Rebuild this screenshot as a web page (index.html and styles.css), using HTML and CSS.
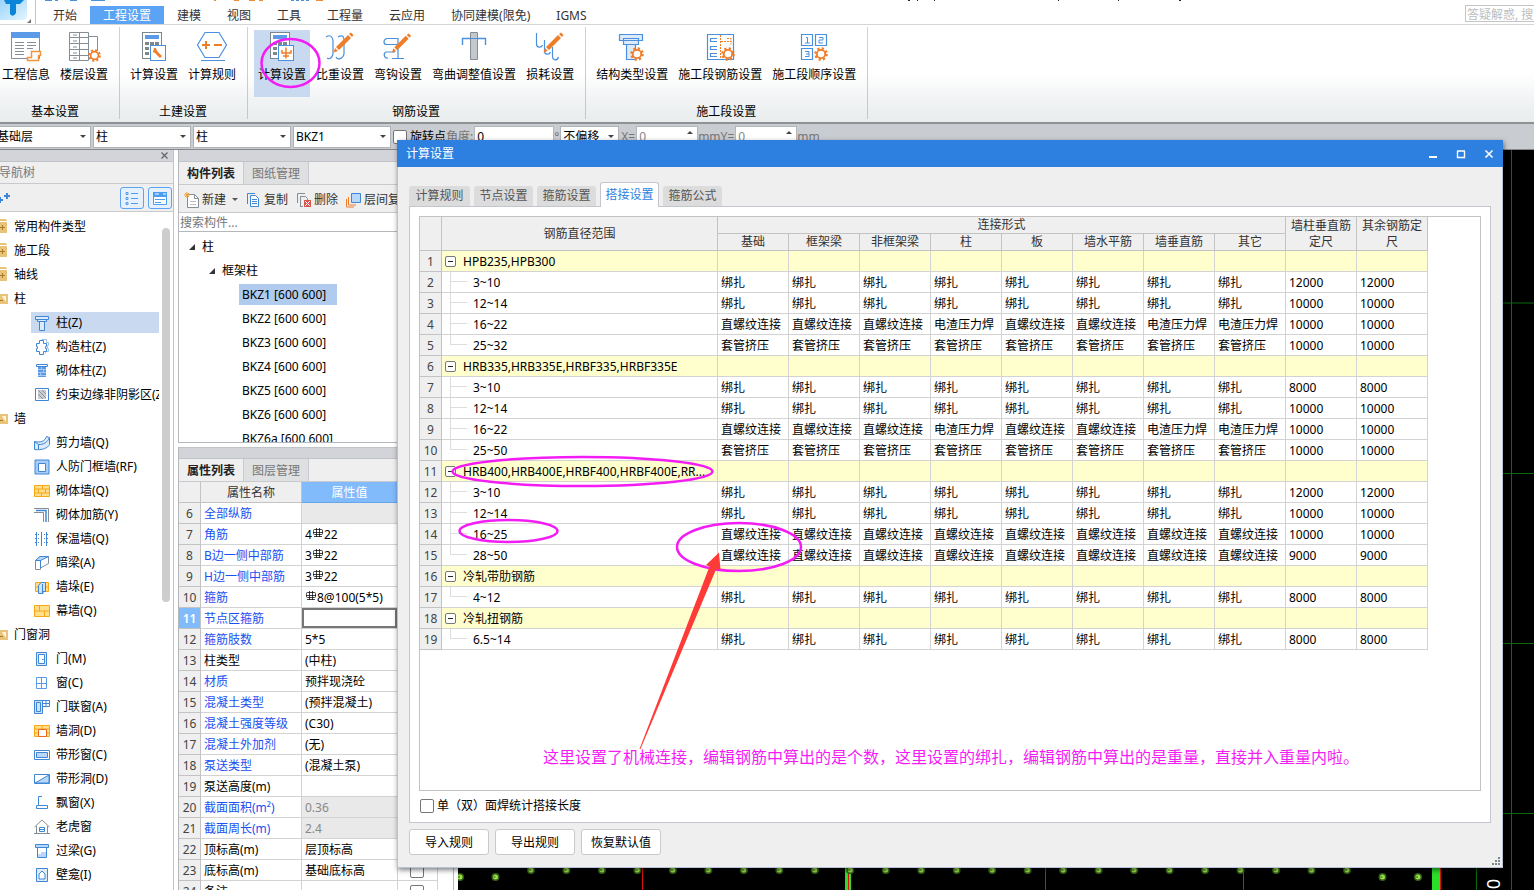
FILE: index.html
```html
<!DOCTYPE html>
<html lang="zh-CN">
<head>
<meta charset="utf-8">
<title>计算设置</title>
<link rel="stylesheet" href="styles.css">
</head>
<body>
<svg class="defs" aria-hidden="true">
  <symbol id="gear" viewBox="0 0 14 14"><circle cx="7" cy="7" r="5.6" fill="none" stroke="#f07d28" stroke-width="2.4" stroke-dasharray="2.2 2.2"/><circle cx="7" cy="7" r="4.2" fill="#fff" stroke="#f07d28" stroke-width="1.8"/></symbol>
  <symbol id="pencil" viewBox="0 0 22 22"><path d="M4 15 16 3l3 3L7 18zM17 2l2-1.500 2.500 2.500L20 5zM3 16l3 3-4.500 1.500z" fill="#f07d28"/></symbol>
  <symbol id="calc" viewBox="0 0 36 32"><rect x="6.500" y="1.500" width="19" height="26" fill="#fff" stroke="#7d868c"/><rect x="9" y="4" width="14" height="4" fill="#5a9ae6"/><path d="M9 11h4v3H9zm5 0h4v3h-4zm5 0h4v3h-4zM9 16h4v3H9zm5 0h4v3h-4zM9 21h4v3H9z" fill="#7d868c"/><rect x="14.500" y="14.500" width="15" height="15" fill="#fff" stroke="#4a90dd"/></symbol>
  <symbol id="folder" viewBox="0 0 16 16"><path d="M1 3h14v11H1z" fill="#e9c37a"/><path d="M8 0h6l1 2H7z" fill="#e9c37a"/><path d="M8 8.500h5M10.500 6v5" stroke="#a87a2c"/></symbol>
  <symbol id="folder-open" viewBox="0 0 16 16"><path d="M0 3h16v10H0z" fill="#e9c37a"/><path d="M10 5h4v6l-3-4z" fill="#fff3d6"/><path d="M6 9.500h5" stroke="#a87a2c"/></symbol>
  <symbol id="column" viewBox="0 0 16 16"><g fill="#dceafa" stroke="#3f86d6"><path d="M1.500 1.500h13v3h-13zM3.500 4.500h9v2h-9zM5.500 6.500h5v9h-5z"/></g></symbol>
  <symbol id="cross-column" viewBox="0 0 16 16"><path d="M7.500 .5h5v3h2v3h-1v3h1v3h-3v2" fill="none" stroke="#9dc3ee"/><path d="M5.500 1.500h4v3h3v3h-1v2h1v3h-3v3h-4v-3h-3v-3h1v-2h-1v-3h3z" fill="#fff" stroke="#3f86d6"/></symbol>
  <symbol id="brick-column" viewBox="0 0 16 16"><path d="M2.500 1.500h11v2h-11z" fill="#fff" stroke="#3f86d6"/><path d="M4 4h8v10H4z" fill="#5a9ae6"/><path d="M4 6.500h8M4 9.500h8M4 12.500h8M7.500 4v2M9.500 7v2M6.500 10v2" stroke="#dceafa" stroke-width=".6"/></symbol>
  <symbol id="hatch" viewBox="0 0 16 16"><path d="M1.500 1.500h13v12h-13z" fill="#fff" stroke="#3f86d6"/><path d="M4 3h8v9H4z" fill="#c9ccd0"/><path d="m4 3 8 8M4 7l5 5M8 3l4 4" stroke="#8d949a"/></symbol>
  <symbol id="shear-wall" viewBox="0 0 16 16"><path d="M.5 6.500C7 8 11 6 12.500 1.500l3 1v7C14 13 8 15.500 .5 14.500z" fill="#dceafa" stroke="#3f86d6"/><path d="M.5 6.500l4 3C9 10 14 7 15.500 2.500M4.500 9.500v5" fill="none" stroke="#3f86d6"/></symbol>
  <symbol id="frame-wall" viewBox="0 0 16 16"><path d="M1 1h14v14H1z" fill="#a9cdf6" stroke="#3f86d6"/><path d="M4.500 4.500h7v8h-7z" fill="#fff" stroke="#3f86d6"/></symbol>
  <symbol id="bricks" viewBox="0 0 16 16"><path d="M.5 2.500h15v11H.5z" fill="#ffdf8c" stroke="#f7a616"/><path d="M0 6h16M0 10h16M8.500 3v3M4.500 6v4M11.500 6v4M7.500 10v4" stroke="#f7a616"/></symbol>
  <symbol id="panels" viewBox="0 0 16 16"><path d="M.5 2.500h15v11H.5z" fill="#ffdf8c" stroke="#f7a616"/><path d="M0 8h16M5.500 3v5M10.500 8v5.500" stroke="#f7a616"/></symbol>
  <symbol id="corner-bars" viewBox="0 0 16 16"><path d="M0 1.500h14.500V15M0 5.500h9.500V15" fill="none" stroke="#858e95"/><path d="M2 3.500h10V15" fill="none" stroke="#3f86d6" stroke-width="1.500"/></symbol>
  <symbol id="insulate" viewBox="0 0 16 16"><path d="M2.500 1v14M7.500 1v14M12.500 1v14" stroke="#3f86d6"/><path d="M1 3.500h13M1 7.500h13M1 11.500h13" stroke="#3f86d6" stroke-dasharray="1 2"/></symbol>
  <symbol id="beam" viewBox="0 0 16 16"><path d="M1.500 5.500 6 1.500h8.500v7L6.500 13v1.500h-5z" fill="#fff" stroke="#858e95"/><path d="M1.500 5.500 6 1.500h8.500L6.500 5.500zM6.500 5v8" fill="#b9d7f9" stroke="#3f86d6"/></symbol>
  <symbol id="pier" viewBox="0 0 16 16"><path d="M1.500 3.500h13v9h-13z" fill="#ffdf8c" stroke="#f7a616"/><path d="M1 8h14" stroke="#f7a616"/><path d="M4.500 6.500 7 3.500h4.500v9H9v2H4.500z" fill="#cfe3fb" stroke="#3f86d6"/><path d="M8.500 5v9" stroke="#3f86d6"/></symbol>
  <symbol id="door" viewBox="0 0 16 16"><path d="M2.500 1.500h10v13h-10z" fill="#dceafa" stroke="#3f86d6"/><path d="M4.500 3.500h6v9h-6z" fill="#fff" stroke="#3f86d6"/><path d="M8 8h1.500v1H8z" fill="#3f86d6"/></symbol>
  <symbol id="window" viewBox="0 0 16 16"><path d="M2.500 2.500h10v11h-10zM7.500 2v12M2 8.500h11" fill="#fff" stroke="#5a9ae6"/></symbol>
  <symbol id="door-window" viewBox="0 0 16 16"><path d="M.5 1.500h8v13h-8z" fill="#cfe3fb" stroke="#3f86d6"/><path d="M2.500 3.500h4v9h-4zM8.500 1.500h7v6h-7zM12 1v7M8 4.500h8" fill="none" stroke="#3f86d6"/></symbol>
  <symbol id="hole" viewBox="0 0 16 16"><path d="M.5 2.500h15v11H.5z" fill="#ffdf8c" stroke="#f7a616"/><path d="M0 6h16M0 10h5m7 0h4M8 3v3" stroke="#f7a616"/><path d="M4.500 6.500h8v7h-8z" fill="#fff" stroke="#ee6a1f"/></symbol>
  <symbol id="strip-window" viewBox="0 0 16 16"><path d="M.5 3.500h15v9H.5z" fill="#fff" stroke="#3f86d6"/><path d="M2.500 5.500h11v5h-11z" fill="#b9d7f9" stroke="#3f86d6"/></symbol>
  <symbol id="strip-hole" viewBox="0 0 16 16"><path d="M.5 3.500h15v9H.5z" fill="#fff" stroke="#3f86d6"/><path d="M1 12 15 4v8z" fill="#b9d7f9" stroke="#3f86d6"/></symbol>
  <symbol id="bay" viewBox="0 0 16 16"><path d="M8 1.500H4.500v9h-2v3h11v-3h-9" fill="none" stroke="#3f86d6"/></symbol>
  <symbol id="dormer" viewBox="0 0 16 16"><path d="m.5 8 7.500-7 7.500 7M2.500 7v7.500h11V7M0 14.500h16" fill="none" stroke="#858e95"/><path d="M5.500 8.500h5v4h-5zM5 10.500h6" fill="none" stroke="#3f86d6"/></symbol>
  <symbol id="lintel" viewBox="0 0 16 16"><path d="M1.500 1.500h13v3h-13z" fill="#b9d7f9" stroke="#3f86d6"/><path d="M3.500 4.500h9v10h-9z" fill="#fff" stroke="#3f86d6"/><path d="M4 14v-3h3V9h5v5z" fill="#b9d7f9"/></symbol>
  <symbol id="niche" viewBox="0 0 16 16"><path d="M2.500 1.500h11v13h-11z" fill="#dceafa" stroke="#3f86d6"/><path d="M5 12V7l3-3 3 3v5z" fill="#fff" stroke="#3f86d6"/></symbol>
  <symbol id="rebar" viewBox="0 0 10 10"><path d="M.5 3.500v-1q0-1 1-1h7q1 0 1 1v3q0 1-1 1h-7q-1 0-1-1zM0 4.500h10M3.500 0v9M6.500 0v9M1 8.500h8" fill="none" stroke="#111" stroke-width=".8"/></symbol>
</svg>

<div class="app">
  <header class="topbar">
    <div class="logo">
      <svg width="36" height="24" viewBox="0 0 36 24" aria-hidden="true"><defs><linearGradient id="lg" x1="0" y1="0" x2="1" y2="1"><stop offset="0" stop-color="#9bd4fb"/><stop offset="1" stop-color="#e3f5ff"/></linearGradient></defs><path d="M0 0h27v16q0 4-4 4H0z" fill="url(#lg)"/><path d="M4 0h20l-4 4h-4v9q-3 5-6 1V4H6z" fill="#0c84d8"/><path d="M31 19v4h-4z" fill="#777"/></svg>
    </div>
    <nav class="tabs" aria-label="功能区">
      <a href="#">开始</a><a href="#" class="on">工程设置</a><a href="#">建模</a><a href="#">视图</a><a href="#">工具</a><a href="#">工程量</a><a href="#">云应用</a><a href="#">协同建模(限免)</a><a href="#">IGMS</a>
    </nav>
    <input class="ask" type="text" placeholder="答疑解惑, 搜索" aria-label="答疑解惑">
    <svg class="cutoff" width="1200" height="2" aria-hidden="true"><path d="M45 0h7M55 0h3M70 0h7M91 0h14M291 0h3m2 0h3m2 0h3m2 0h3" stroke="#4a90dd" stroke-width="2"/><path d="M214 0h2M234 0h5M249 0h6M259 0h4M316 0h7" stroke="#ef8a35" stroke-width="2"/><path d="M908 0h2M917 0h1M934 0h1M1058 0h1M1118 0h1M1179 0h2" stroke="#222" stroke-width="2"/></svg>
  </header>

  <section class="ribbon">
    <div class="group first">
      <div class="tools">
        <button><svg viewBox="0 0 36 32"><path d="M3.500 1.500h28v26h-28z" fill="#fff" stroke="#858e95"/><path d="M3 1h29v6H3z" fill="#5a9ae6"/><path d="M7 11.500h9M7 14.500h9M7 17.500h9M7 20.500h9M7 23.500h9M19 11.500h9M19 14.500h9M19 17.500h6" stroke="#858e95"/><path d="M23.500 20.500h9v4h-2v5h-11v-3h4z" fill="#fff" stroke="#f09440" stroke-width="1.500"/></svg>工程信息</button>
        <button><svg viewBox="0 0 36 32"><path d="M3.500 1.500h19v28h-19zM22.500 5.500h9V20M13.500 1v29M3 6.500h19M3 12.500h19M3 18.500h19M3 24.500h19" fill="none" stroke="#858e95"/><path d="M7 4h4M7 10h4M7 16h4M7 22h4M7 27h4" stroke="#858e95"/><use href="#gear" x="22" y="18" width="13" height="13"/></svg>楼层设置</button>
      </div>
      <h2>基本设置</h2>
    </div>
    <div class="group">
      <div class="tools">
        <button><svg viewBox="0 0 36 32"><use href="#calc"/><path d="m18 17 2 0 1 3 5 5-2 2-5-5-2-1z" fill="#f07d28"/></svg>计算设置</button>
        <button><svg viewBox="0 0 36 32"><path d="M11 1.500h14L32.500 14 25 26.500H11L3.500 14zM7 29.500h24" fill="none" stroke="#4a90dd" stroke-width="1.200"/><path d="M8 14h8M12 10v8M20 14h8" stroke="#f07d28" stroke-width="2"/></svg>计算规则</button>
      </div>
      <h2>土建设置</h2>
    </div>
    <div class="group">
      <div class="tools">
        <button class="on"><svg viewBox="0 0 36 32"><use href="#calc"/><path d="M22 16.500v11M18 19v3h9v-3M19 25h6" fill="none" stroke="#f07d28" stroke-width="1.500"/></svg>计算设置</button>
        <button><svg viewBox="0 0 36 32"><path d="M4 6c4-3 7 0 7 4v12c0 4-3 7-6 5M16 6c5-3 6 0 6 4v12c0 5-6 8-8 4" fill="none" stroke="#4a90dd" stroke-width="1.200"/><use href="#pencil" x="10" y="1" width="22" height="22"/></svg>比重设置</button>
        <button><svg viewBox="0 0 36 32"><path d="M18 7.500H7c-4 1-4 6 0 6h14M18 7v21M12 27.500h12M15 21H6c-3 1-2 7 2 6" fill="none" stroke="#4a90dd" stroke-width="1.200"/><use href="#pencil" x="10" y="2" width="22" height="21"/></svg>弯钩设置</button>
        <button><svg viewBox="0 0 36 32"><path d="M6.500 14V7.500h23V14" fill="none" stroke="#4a90dd" stroke-width="1.400"/><path d="M14.500 1.500h7v27h-7z" fill="#c2c8cd" stroke="#858e95"/><path d="M14 7.500h8" stroke="#4a90dd"/></svg>弯曲调整值设置</button>
        <button><svg viewBox="0 0 36 32"><path d="M4.500 2v11c0 4 5 4 6 1M12.500 9v11c0 4 5 4 6 1M20.500 16v9c0 5 5 5 6 1" fill="none" stroke="#4a90dd" stroke-width="1.200"/><use href="#pencil" x="10" y="1" width="22" height="22"/></svg>损耗设置</button>
      </div>
      <h2>钢筋设置</h2>
    </div>
    <div class="group">
      <div class="tools">
        <button><svg viewBox="0 0 36 32"><g fill="#dceafa" stroke="#4a90dd" stroke-width="1.200"><path d="M5.500 3.500h23v6h-23zM9.500 7.500h15v6h-15zM12.500 13.500h9v15h-9z"/></g><use href="#gear" x="16" y="16" width="14" height="14"/></svg>结构类型设置</button>
        <button><svg viewBox="0 0 36 32"><path d="M5.500 3.500h26v25h-26zM15 7.500H8.500v3H15M15 15.500H8.500v3H15M15 22.500H8.500v3H15" fill="none" stroke="#4a90dd" stroke-width="1.200"/><path d="M18.500 4v24M19 10.500h10M25 7.500h4v6" fill="none" stroke="#f07d28" stroke-dasharray="2 1"/><use href="#gear" x="19" y="16" width="14" height="14"/></svg>施工段钢筋设置</button>
        <button><svg viewBox="0 0 36 32"><path d="M5.500 3.500h11v11h-11zM19.500 3.500h11v11h-11zM5.500 17.500h11v11h-11z" fill="#fff" stroke="#4a90dd" stroke-width="1.200"/><path d="M10 6.500h1.500V12M9 12h5M23 6.500h4V9h-4v3h4M9 20.500h4v5H9M10 23h3" fill="none" stroke="#4a90dd"/><use href="#gear" x="18" y="16" width="14" height="14"/></svg>施工段顺序设置</button>
      </div>
      <h2>施工段设置</h2>
    </div>
  </section>

  <section class="options">
    <select class="cut" aria-label="楼层"><option>基础层</option></select>
    <select aria-label="构件大类"><option>柱</option></select>
    <select aria-label="构件类型"><option>柱</option></select>
    <select aria-label="构件"><option>BKZ1</option></select>
    <label class="rot"><input type="checkbox">旋转点</label>
    <label class="dim" for="angle">角度:</label><input id="angle" class="angle" type="text" value="0"><span class="dim deg">°</span>
    <select class="shift" aria-label="偏移"><option>不偏移</option></select>
    <label class="dim" for="ox">X=</label><input id="ox" class="off" type="text" value="0"><span class="dim">mm</span>
    <label class="dim" for="oy">Y=</label><input id="oy" class="off" type="text" value="0"><span class="dim">mm</span>
  </section>

  <main class="work">
    <aside class="nav">
      <div class="strip"><button aria-label="关闭"><svg width="7" height="7"><path d="m.5.5 6 6m0-6-6 6" stroke="#666" stroke-width="1.300"/></svg></button></div>
      <h2>导航树</h2>
      <div class="nav-tools">
        <svg class="plus" width="14" height="14" viewBox="0 0 14 14"><path d="M0 9h6M3 6v6M7 5h6M10 2v6" stroke="#3f86d6" stroke-width="2"/></svg>
        <button aria-label="列表"><svg width="16" height="16" viewBox="0 0 16 16"><path d="M2 2.500h2v2H2zM2 7.500h2v2H2zM2 12.500h2v2H2zM7 3.500h7M7 8.500h7M7 13.500h7" fill="none" stroke="#4a9df0"/></svg></button>
        <button aria-label="面板"><svg width="16" height="16" viewBox="0 0 16 16"><path d="M1.500 2.500h13v12h-13z" fill="#fff" stroke="#4a9df0"/><path d="M1 2h14v5H1z" fill="#4a9df0"/><path d="M4 3v2M6 3v2M11 4h3" stroke="#fff"/><path d="M3 9.500h10M3 12.500h6" stroke="#4a9df0"/></svg></button>
      </div>
      <div class="nav-body">
        <ul class="nav-list">
          <li class="f"><svg><use href="#folder"/></svg>常用构件类型</li>
          <li class="f"><svg><use href="#folder"/></svg>施工段</li>
          <li class="f"><svg><use href="#folder"/></svg>轴线</li>
          <li class="f"><svg><use href="#folder-open"/></svg>柱</li>
          <li><span class="on"><svg><use href="#column"/></svg>柱(Z)</span></li>
          <li><span><svg><use href="#cross-column"/></svg>构造柱(Z)</span></li>
          <li><span><svg><use href="#brick-column"/></svg>砌体柱(Z)</span></li>
          <li><span><svg><use href="#hatch"/></svg>约束边缘非阴影区(Z)</span></li>
          <li class="f"><svg><use href="#folder-open"/></svg>墙</li>
          <li><span><svg><use href="#shear-wall"/></svg>剪力墙(Q)</span></li>
          <li><span><svg><use href="#frame-wall"/></svg>人防门框墙(RF)</span></li>
          <li><span><svg><use href="#bricks"/></svg>砌体墙(Q)</span></li>
          <li><span><svg><use href="#corner-bars"/></svg>砌体加筋(Y)</span></li>
          <li><span><svg><use href="#insulate"/></svg>保温墙(Q)</span></li>
          <li><span><svg><use href="#beam"/></svg>暗梁(A)</span></li>
          <li><span><svg><use href="#pier"/></svg>墙垛(E)</span></li>
          <li><span><svg><use href="#panels"/></svg>幕墙(Q)</span></li>
          <li class="f"><svg><use href="#folder-open"/></svg>门窗洞</li>
          <li><span><svg><use href="#door"/></svg>门(M)</span></li>
          <li><span><svg><use href="#window"/></svg>窗(C)</span></li>
          <li><span><svg><use href="#door-window"/></svg>门联窗(A)</span></li>
          <li><span><svg><use href="#hole"/></svg>墙洞(D)</span></li>
          <li><span><svg><use href="#strip-window"/></svg>带形窗(C)</span></li>
          <li><span><svg><use href="#strip-hole"/></svg>带形洞(D)</span></li>
          <li><span><svg><use href="#bay"/></svg>飘窗(X)</span></li>
          <li><span><svg><use href="#dormer"/></svg>老虎窗</span></li>
          <li><span><svg><use href="#lintel"/></svg>过梁(G)</span></li>
          <li><span><svg><use href="#niche"/></svg>壁龛(I)</span></li>
        </ul>
        <div class="thumb"></div>
      </div>
    </aside>

    <div class="mid">
      <section class="panel parts">
        <div class="strip"></div>
        <div class="ptabs"><button class="on">构件列表</button><button>图纸管理</button></div>
        <div class="ptools">
          <button><svg width="16" height="16" viewBox="0 0 16 16"><path d="M3.500 2.500h7l4 4v9h-11z" fill="#fff" stroke="#858e95"/><path d="M10.500 2.500v4h4" fill="none" stroke="#858e95"/><path d="M6 9.500h6M6 12.500h6" stroke="#b8bec3"/><path d="M3 0v6M0 3h6M1 1l4 4M5 1 1 5" stroke="#f0a030"/></svg>新建<i class="caret"></i></button>
          <button><svg width="16" height="16" viewBox="0 0 16 16"><path d="M1.500 12V1.500H9" fill="none" stroke="#3f86d6"/><path d="M4.500 3.500h5l3 3v8h-8z" fill="#fff" stroke="#3f86d6"/><path d="M6 7.500h5M6 9.500h5M6 11.500h5" stroke="#3f86d6"/></svg>复制</button>
          <button><svg width="16" height="16" viewBox="0 0 16 16"><path d="M1.500 11V1.500H9M4.500 14V4.500h5l2 2V8M4 14.500h3" fill="none" stroke="#858e95"/><path d="M8 8h7v7H8z" fill="#d9534f"/><path d="m9 9 5 5m0-5-5 5" stroke="#fff"/></svg>删除</button>
          <button><svg width="16" height="16" viewBox="0 0 16 16"><path d="M.5 7v8H8M2.500 5v8H10" fill="none" stroke="#f07d28"/><path d="M5.500 1.500h9v9h-9z" fill="#b9d7f9" stroke="#3f86d6"/></svg>层间复制</button>
        </div>
        <input class="find" type="text" placeholder="搜索构件..." aria-label="搜索构件">
        <ul class="parts-list">
          <li class="l1"><i class="tri"></i>柱</li>
          <li class="l2"><i class="tri"></i>框架柱</li>
          <li class="l3"><span class="on">BKZ1 [600 600]</span></li>
          <li class="l3"><span>BKZ2 [600 600]</span></li>
          <li class="l3"><span>BKZ3 [600 600]</span></li>
          <li class="l3"><span>BKZ4 [600 600]</span></li>
          <li class="l3"><span>BKZ5 [600 600]</span></li>
          <li class="l3"><span>BKZ6 [600 600]</span></li>
          <li class="l3"><span>BKZ6a [600 600]</span></li>
        </ul>
      </section>
      <section class="panel props">
        <div class="strip"></div>
        <div class="ptabs"><button class="on">属性列表</button><button>图层管理</button></div>
        <table class="ptable">
          <colgroup><col class="pn"><col class="pk"><col class="pv"><col class="pa"></colgroup>
          <thead><tr><th></th><th>属性名称</th><th class="sel">属性值</th><th aria-label="附加"></th></tr></thead>
          <tbody id="prop-rows"></tbody>
        </table>
      </section>
    </div>

    <div class="canvas">
      <svg class="drawing" width="1076" height="740" viewBox="458 150 1076 740" aria-hidden="true">
        <path d="M1511.500 150v740M1476.500 860v30" stroke="#0a6a10"/>
        <path d="M1500 303h34M1500 473.500h34M1500 643.500h34M1500 813.500h34" stroke="#0a6a10"/>
        <path d="M848 860v30" stroke="#2ade2a" stroke-width="6"/>
        <path d="M1436 860v30" stroke="#2ade2a" stroke-width="8"/>
        <path d="M642.500 860v30M848.500 860v30M1045.500 860v30M1243.500 860v30M1440.500 860v30" stroke="#e01010"/>
        <g id="dots"></g>
        <text class="axis" transform="translate(1500 889) rotate(-90)">0</text>
      </svg>
    </div>
  </main>

  <section class="dialog" role="dialog" aria-labelledby="dlg">
    <header class="title">
      <h1 id="dlg">计算设置</h1>
      <button aria-label="最小化"><svg width="10" height="10"><path d="M1 8h8" stroke="#fff" stroke-width="2"/></svg></button>
      <button aria-label="最大化"><svg width="10" height="10"><path d="M1.500 2v6.500h7V2M1 2h8" fill="none" stroke="#fff" stroke-width="1.400"/></svg></button>
      <button aria-label="关闭"><svg width="10" height="10"><path d="m1.500 1.500 7 7m0-7-7 7" stroke="#fff" stroke-width="1.600"/></svg></button>
    </header>
    <div class="dtabs"><button>计算规则</button><button>节点设置</button><button>箍筋设置</button><button class="on">搭接设置</button><button>箍筋公式</button></div>
    <div class="page">
      <div class="frame">
        <table class="grid">
          <colgroup><col class="gn"><col class="gname"><col span="10"></colgroup>
          <thead>
            <tr><th rowspan="2"></th><th rowspan="2">钢筋直径范围</th><th colspan="8">连接形式</th><th rowspan="2">墙柱垂直筋定尺</th><th rowspan="2">其余钢筋定尺</th></tr>
            <tr><th>基础</th><th>框架梁</th><th>非框架梁</th><th>柱</th><th>板</th><th>墙水平筋</th><th>墙垂直筋</th><th>其它</th></tr>
          </thead>
          <tbody id="grid-rows"></tbody>
        </table>
      </div>
      <label class="weld"><input type="checkbox">单（双）面焊统计搭接长度</label>
    </div>
    <footer><button>导入规则</button><button>导出规则</button><button>恢复默认值</button>
      <svg class="grip" width="8" height="8"><path d="M6 0h2v2H6zM3 3h2v2H3zM6 3h2v2H6zM0 6h2v2H0zM3 6h2v2H3zM6 6h2v2H6z" fill="#7d868c"/></svg>
    </footer>
  </section>

  <svg class="marks" width="1534" height="890" viewBox="0 0 1534 890" aria-hidden="true">
    <g fill="none" stroke="#f41cf4" stroke-width="2.500">
      <ellipse cx="290.500" cy="63" rx="29" ry="24"/>
      <ellipse cx="582.500" cy="471.500" rx="130" ry="14.500"/>
      <ellipse cx="508.500" cy="531" rx="49" ry="11"/>
      <ellipse cx="739" cy="547" rx="62" ry="24"/>
    </g>
    <path d="M639.500 749 709.500 566.500 706 565 719 552.500 720.500 569.500 716 569.500 640.500 749z" fill="#ff3b37"/>
  </svg>
  <p class="note">这里设置了机械连接，编辑钢筋中算出的是个数，这里设置的绑扎，编辑钢筋中算出的是重量，直接并入重量内啦。</p>
</div>
<script src="app.js"></script>
</body>
</html>
```

FILE: styles.css
```css
* { box-sizing: border-box; }
html, body { height: 100%; margin: 0; }
body, button, input, select {
  font-family: "Noto Sans", "Noto Sans CJK SC", sans-serif;
  font-size: 12px;
  line-height: 16px;
  color: #000;
}
button { background: none; border: 0; padding: 0; white-space: nowrap; }
h1, h2, p, ul { margin: 0; padding: 0; font-size: 12px; font-weight: 400; list-style: none; }
svg { display: block; flex: none; }
.defs { position: absolute; width: 0; height: 0; }
.app { position: relative; height: 100vh; display: flex; flex-direction: column; overflow: hidden; background: #fff; }

/* top tabs */
.topbar { position: relative; display: flex; align-items: flex-end; height: 25px; flex: none; border-bottom: 1px solid #d6d6d6; }
.logo { width: 40px; align-self: flex-start; height: 24px; background: linear-gradient(#c4c4c4, #c4c4c4) 35px 0 / 1px 24px no-repeat; }
.tabs { display: flex; flex: 1; }
.tabs a { padding: 0 13px; height: 18px; line-height: 19px; color: #333; text-decoration: none; white-space: nowrap; }
.tabs .on { background: #5ba4f5; color: #fff; }
.ask { width: 69px; height: 17px; margin-bottom: 2px; padding: 1px 1px 0; border: 1px solid #c4c4c4; border-right: 0; border-radius: 0; background: #fff; }
.ask::placeholder { color: #bdbdbd; }
.cutoff { position: absolute; left: 0; top: 0; }

/* ribbon */
.ribbon { display: flex; flex: none; height: 99px; border-bottom: 2px solid #8e9294; background: linear-gradient(#fff 50%, #f2f4f5 75%, #e8ecec); }
.group { display: flex; flex-direction: column; padding: 5px 8px 0 6px; background: linear-gradient(#d0d2d3, #c4c6c8) right 2px / 1px 92px no-repeat; }
.first { margin-left: -8px; }
.tools { display: flex; gap: 2px; height: 67px; }
.tools button { display: flex; flex-direction: column; align-items: center; padding: 1px 4px 0; }
.tools button svg { width: 36px; height: 32px; margin-bottom: 4px; }
.tools .on { background: #c9daf0; }
.group h2 { text-align: center; padding-top: 7px; }

/* option bar */
.options { display: flex; align-items: center; flex: none; height: 26px; background: #c9ccd1; border-bottom: 1px solid #84888c; }
select { appearance: none; width: 98px; height: 22px; margin-right: 2px; padding: 0 2px; border: 1px solid #aeb1b5; border-radius: 0; background: #fff url("data:image/svg+xml,%3Csvg xmlns='http://www.w3.org/2000/svg' width='6' height='3'%3E%3Cpath d='M0 0h6L3 3z' fill='%23444'/%3E%3C/svg%3E") right 4px center no-repeat; }
.options .cut { width: 97px; margin-left: -6px; }
.options .shift { width: 59px; margin-left: 1px; }
.rot { display: flex; align-items: center; gap: 3px; }
input[type=checkbox] { appearance: none; width: 14px; height: 14px; margin: 0; border: 1px solid #777; border-radius: 2px; background: #fff; }
.dim { color: #777; white-space: nowrap; }
.options input[type=text] { height: 22px; padding: 0 2px; border: 1px solid #b4b7ba; border-radius: 0; background: #fff; }
.options .angle { width: 80px; margin-left: 1px; }
.deg { width: 5px; }
.options input.off { width: 62px; margin-left: 1px; color: #888; background: #fff url("data:image/svg+xml,%3Csvg xmlns='http://www.w3.org/2000/svg' width='6' height='3'%3E%3Cpath d='M0 3h6L3 0z' fill='%23444'/%3E%3C/svg%3E") right 4px top 4px no-repeat; }

/* work area */
.work { display: flex; flex: 1; min-height: 0; }
.strip { display: flex; align-items: center; justify-content: flex-end; height: 12px; flex: none; background: #d2d4d9; border-bottom: 1px solid #c0c3c8; padding-right: 5px; }
.nav { display: flex; flex-direction: column; flex: none; width: 174px; border-right: 1px solid #c0c3c8; overflow: hidden; }
.nav h2 { height: 22px; line-height: 22px; margin-left: -1px; background: #efefef; color: #777; border-bottom: 1px solid #c8cacd; }
.nav-tools { display: flex; align-items: center; gap: 4px; height: 28px; padding-right: 1px; flex: none; background: #efefef; border-bottom: 1px solid #c8cacd; }
.plus { margin-left: -3px; margin-right: auto; }
.nav-tools button { display: flex; align-items: center; justify-content: center; width: 24px; height: 22px; border: 1px solid #5ba4f5; border-radius: 3px; background: #e6f1fd; }
.nav-body { display: flex; gap: 3px; flex: 1; min-height: 0; padding-top: 2px; }
.nav-list { width: 159px; overflow: hidden; white-space: nowrap; }
.nav-list li { display: flex; align-items: center; height: 24px; padding-left: 31px; }
.nav-list .f { padding: 2px 0 0; gap: 6px; margin-left: -8px; }
.nav-list svg { width: 16px; height: 16px; }
.nav-list span { display: flex; align-items: center; gap: 6px; flex: 1; height: 21px; padding: 1px 0 0 3px; min-width: 0; }
.nav-list .on { background: #c9daf0; }
.thumb { width: 8px; height: 374px; margin-top: 14px; border-radius: 4px; background: #cdcdcd; }

.mid { display: flex; flex-direction: column; gap: 4px; flex: none; width: 276px; margin: 0 4px; overflow: hidden; }
.panel { border: 1px solid #b4b8bd; border-top: 0; flex: none; }
.parts { height: 293px; }
.props { border-top: 1px solid #c0c3c8; }
.props .strip { height: 11px; }
.ptabs { display: flex; height: 23px; background: #efefef; border-bottom: 1px solid #c8cacd; }
.ptabs button { width: 65px; height: 22px; padding-top: 2px; border-right: 1px solid #c8cacd; background: #dfe0e1; color: #777; }
.ptabs .on { background: #efefef; color: #222; font-weight: 600; }
.ptools { display: flex; align-items: center; gap: 8px; height: 28px; padding: 2px 0 0 5px; background: #efefef; border-bottom: 1px solid #c8cacd; overflow: hidden; }
.ptools button { display: flex; align-items: center; gap: 2px; color: #333; }
.caret { width: 6px; height: 3px; margin-left: 4px; background: #555; clip-path: polygon(0 0, 100% 0, 50% 100%); }
.find { display: block; width: 100%; height: 19px; padding: 1px 1px 0; border: 0; border-bottom: 1px solid #b4b8bd; }
.find::placeholder { color: #777; }
.parts-list { height: 210px; padding-top: 2px; overflow: hidden; }
.parts-list li { display: flex; align-items: center; gap: 7px; height: 24px; }
.parts-list .l1 { padding: 2px 0 0 10px; }
.parts-list .l2 { padding: 2px 0 0 30px; }
.l3 { padding-left: 60px; }
.parts-list span { height: 21px; line-height: 21px; padding: 0 11px 0 3px; white-space: pre; }
.parts-list .on { background: #b1cbee; }
.tri { width: 6px; height: 6px; background: #333; clip-path: polygon(100% 0, 100% 100%, 0 100%); }

table { table-layout: fixed; border-collapse: separate; border-spacing: 0; }
th, td { padding: 0; font-weight: 400; overflow: hidden; white-space: nowrap; border-right: 1px solid #d3d3d3; border-bottom: 1px solid #d3d3d3; }
.ptable { width: 259px; }
.pn { width: 22px; }
.pk { width: 101px; }
.pv { width: 96px; }
.pa { width: 40px; }
.ptable tr { height: 21px; }
.ptable th { padding-top: 2px; background: #efefef; color: #333; border-color: #c3c3c3; }
.ptable .sel { background: #82bbfb; color: #fff; border-color: #68a6ea; }
.ptable td { padding: 2px 0 0 3px; }
.ptable .key { color: #1a50f0; }
.ptable .dark { color: #000; }
.ptable .ro { background: #e9e9e9; color: #888; }
.ptable .focus { box-shadow: inset 0 0 0 2px #777; }
.ptable td input { display: block; margin-left: 9px; }
.ptable svg { display: inline-block; width: 10px; height: 10px; margin: 0 1px; vertical-align: 1px; }

.canvas { position: relative; flex: 1; min-width: 0; overflow: hidden; background: #000; }
.drawing { position: absolute; left: 0; top: 0; }
.axis { fill: #fff; font: 18px "Liberation Sans", sans-serif; }

/* dialog */
.dialog { position: absolute; left: 397px; right: 31px; top: 140px; bottom: 22px; display: flex; flex-direction: column; background: #efefef; border: 1px solid #b9c2d4; border-top: 0; box-shadow: 1px 2px 5px rgba(0, 0, 0, .5); }
.title { display: flex; align-items: center; gap: 18px; height: 27px; flex: none; margin: 0 -1px; padding: 0 9px; background: #2d7fe0; }
.title h1 { flex: 1; padding-top: 1px; color: #fff; }
.dtabs { display: flex; align-items: flex-end; gap: 4px; height: 39px; padding-left: 11px; flex: none; }
.dtabs button { width: 59px; height: 20px; background: #dcdcdc; border-radius: 3px 3px 0 0; color: #555; }
.dtabs button:first-child { width: 61px; }
.dtabs .on { position: relative; z-index: 1; height: 25px; margin-bottom: -1px; background: #fff; color: #2d7fe0; border: 1px solid #c3c6cc; border-bottom: 0; }
.page { display: flex; flex-direction: column; flex: 1; min-height: 0; margin: 0 11px; padding: 9px 9px 8px; background: #fff; border: 1px solid #c3c6cc; }
.frame { flex: 1; min-height: 0; border: 1px solid #c3c3c3; overflow: hidden; }
.grid { width: 1008px; }
.gn { width: 22px; }
.gname { width: 276px; }
.grid th { height: 17px; line-height: 16px; background: #efefef; color: #333; border-color: #c3c3c3; white-space: normal; }
.grid td { height: 21px; padding: 2px 0 0 3px; line-height: 18px; }
.grid .tree { padding-top: 0; }
.grid .num, .ptable .num { padding-left: 0; text-align: center; background: #efefef; color: #444; border-color: #c3c3c3; }
.ptable .num.sel { background: #82bbfb; color: #fff; font-weight: 600; }
.grid .band td:not(.num) { background: #ffffcd; }
.name { display: flex; align-items: center; height: 20px; }
.name b { padding-top: 2px; font-weight: 400; }
.minus { width: 11px; height: 11px; margin-right: 7px; border: 1px solid #777; border-radius: 2px; background: linear-gradient(#222, #222) center / 5px 1px no-repeat #fff; }
.branch { width: 17px; height: 20px; margin: 0 6px 0 5px; background: linear-gradient(#ddd, #ddd) 0 0 / 1px 20px no-repeat, linear-gradient(#ddd, #ddd) 0 9px / 17px 1px no-repeat; }
.branch.last { background-size: 1px 10px, 17px 1px; }
.weld { display: flex; align-items: center; gap: 3px; margin-top: 7px; padding-left: 1px; }
.dialog footer { display: flex; align-items: flex-start; gap: 6px; flex: none; height: 44px; padding: 6px 2px 2px 11px; }
.dialog footer button { width: 80px; height: 26px; padding-top: 2px; background: #fff; border: 1px solid #c9c9c9; border-radius: 3px; }
.grip { margin-left: auto; align-self: flex-end; }

/* annotations */
.marks { position: absolute; left: 0; top: 0; pointer-events: none; }
.note { position: absolute; left: 543px; top: 745px; font-size: 16px; line-height: 24px; color: #f41cf4; white-space: nowrap; }
```

FILE: app.js
```js
const B = '绑扎', L = '直螺纹连接', T = '套管挤压', D = '电渣压力焊';
const same = v => Array(8).fill(v);
const mixed = [L, L, L, D, L, L, D, D];
const rows = [
  ['HPB235,HPB300'],
  ['3~10', same(B), 12000], ['12~14', same(B), 10000], ['16~22', mixed, 10000], ['25~32', same(T), 10000],
  ['HRB335,HRB335E,HRBF335,HRBF335E'],
  ['3~10', same(B), 8000], ['12~14', same(B), 10000], ['16~22', mixed, 10000], ['25~50', same(T), 10000],
  ['HRB400,HRB400E,HRBF400,HRBF400E,RR...'],
  ['3~10', same(B), 12000], ['12~14', same(B), 10000], ['16~25', same(L), 10000], ['28~50', same(L), 9000],
  ['冷轧带肋钢筋'],
  ['4~12', same(B), 8000],
  ['冷轧扭钢筋'],
  ['6.5~14', same(B), 8000]
];
document.getElementById('grid-rows').innerHTML = rows.map(([name, kinds, len], i) => {
  const num = `<td class="num">${i + 1}</td>`;
  if (!kinds) {
    return `<tr class="band">${num}<td class="tree"><div class="name"><span class="minus"></span><b>${name}</b></div></td>${'<td></td>'.repeat(10)}</tr>`;
  }
  const last = !rows[i + 1] || !rows[i + 1][1];
  return `<tr>${num}<td class="tree"><div class="name"><span class="branch${last ? ' last' : ''}"></span><b>${name}</b></div></td>` +
    kinds.map(k => `<td>${k}</td>`).join('') + `<td>${len}</td><td>${len}</td></tr>`;
}).join('');

const R = '<svg><use href="#rebar"/></svg>';
const props = [
  ['全部纵筋', '', 'ro'], ['角筋', `4${R}22`], ['B边一侧中部筋', `3${R}22`], ['H边一侧中部筋', `3${R}22`],
  ['箍筋', `${R}8@100(5*5)`], ['节点区箍筋', '', 'focus'], ['箍筋肢数', '5*5'], ['柱类型', '(中柱)', '', 1],
  ['材质', '预拌现浇砼'], ['混凝土类型', '(预拌混凝土)'], ['混凝土强度等级', '(C30)'], ['混凝土外加剂', '(无)'],
  ['泵送类型', '(混凝土泵)'], ['泵送高度(m)', '', '', 1], ['截面面积(m²)', '0.36', 'ro'], ['截面周长(m)', '2.4', 'ro'],
  ['顶标高(m)', '层顶标高', '', 1], ['底标高(m)', '基础底标高', '', 1], ['备注', '', '', 1]
];
document.getElementById('prop-rows').innerHTML = props.map(([key, val, cls = '', dark], i) =>
  `<tr><td class="num${cls === 'focus' ? ' sel' : ''}">${i + 6}</td><td class="key${dark ? ' dark' : ''}">${key}</td>` +
  `<td class="${cls}">${val}</td><td><input type="checkbox" aria-label="附加 ${key}"></td></tr>`).join('');

let dots = '';
for (let n = 0; n < 28; n++) {
  const x = 460 + n * 35.48, y = n < 2 || n > 25 ? 877 : 870;
  dots += `<circle cx="${x}" cy="${y}" r="4" fill="#35601a"/><circle cx="${x}" cy="${y}" r="2.5" fill="#9be04a"/><path d="M${x - 2} ${y}h2" stroke="#2a5210"/>`;
}
document.getElementById('dots').innerHTML = dots;
```
